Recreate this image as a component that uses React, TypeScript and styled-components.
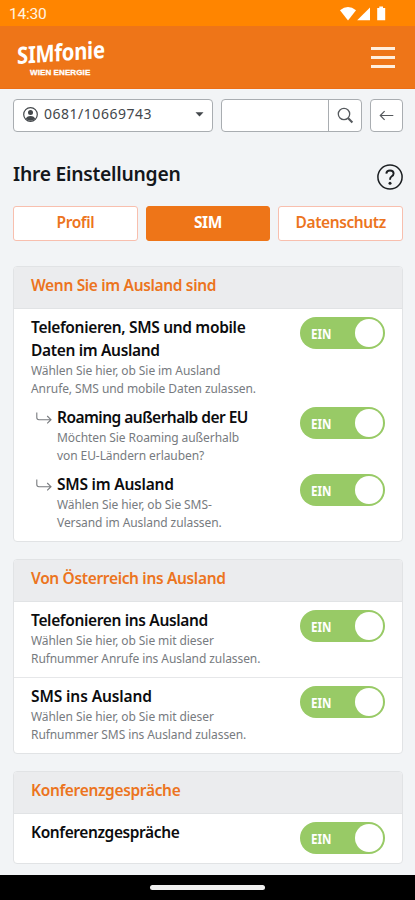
import React from 'react';
import styled, { createGlobalStyle } from 'styled-components';

const Global = createGlobalStyle`
  * { box-sizing: border-box; }
  html, body { margin: 0; background: #f2f4f6; }
  body { font-family: "Noto Sans", sans-serif; color: #0c0c0e; overflow: hidden; }
`;

const Screen = styled.div`
  width: 415px;
  height: 900px;
  display: flex;
  flex-direction: column;
  overflow: hidden;
  background: #f2f4f6;
`;

const StatusBar = styled.div`
  flex: none;
  height: 26px;
  padding: 1px 27px 0 9px;
  display: flex;
  align-items: center;
  justify-content: space-between;
  background: #ff8500;
  color: #fff4e4;
  font: 400 15.5px/26px Roboto, sans-serif;
  letter-spacing: -0.25px;
`;

const StatusIcons = styled.svg`
  width: 48px;
  height: 16px;
  display: block;
`;

const Header = styled.header`
  flex: none;
  height: 63px;
  padding: 0 20px 0 17px;
  display: flex;
  justify-content: space-between;
  align-items: flex-start;
  background: #ee7518;
  border-bottom: 1px solid #ec6e16;
`;

const Brand = styled.div`
  padding-top: 11px;
  display: flex;
  flex-direction: column;
  color: #fff;
`;

const BrandName = styled.div`
  width: 106px;
  height: 29px;
  font-size: 23.5px;
  font-weight: 700;
  line-height: 30px;
  white-space: nowrap;
  transform-origin: 0 50%;
  transform: translateY(3px) skewY(-4deg) scaleX(0.86);
  letter-spacing: -0.3px;
`;

const BrandOwner = styled.div`
  padding-left: 13px;
  margin-top: 1px;
  font-family: "Liberation Sans", sans-serif;
  font-size: 8px;
  font-weight: 700;
  line-height: 12px;
  letter-spacing: 0.1px;
  -webkit-text-stroke: 0.3px #fff;
  white-space: nowrap;
`;

const MenuButton = styled.button`
  width: 24px;
  height: 21px;
  margin-top: 21px;
  padding: 0;
  border: 0;
  background: none;
  display: flex;
  flex-direction: column;
  justify-content: space-between;
`;

const MenuLine = styled.span`
  height: 3px;
  width: 24px;
  background: #ffeedd;
`;

const Main = styled.main`
  flex: 1;
  padding: 10px 12px 0 13px;
  display: flex;
  flex-direction: column;
`;

const Toolbar = styled.div`
  display: flex;
  height: 33px;
  gap: 8px;
`;

const NumberSelect = styled.div`
  width: 200px;
  display: flex;
  align-items: center;
  padding: 0 8px 3px 9px;
  background: #fff;
  border: 1px solid #a9adb1;
  border-radius: 4px;
  color: #43474b;
`;

const NumberText = styled.span`
  flex: 1;
  margin-left: 6px;
  font-size: 14px;
  line-height: 20px;
  letter-spacing: 0.52px;
`;

const SearchGroup = styled.div`
  width: 141px;
  display: flex;
  background: #fff;
  border: 1px solid #a9adb1;
  border-radius: 4px;
`;

const SearchField = styled.input`
  width: 106px;
  min-width: 0;
  border: 0;
  background: none;
  outline: none;
`;

const SearchButton = styled.button`
  flex: 1;
  padding: 0;
  border: 0;
  border-left: 1px solid #a9adb1;
  background: none;
  display: grid;
  place-items: center;
`;

const BackButton = styled.button`
  width: 33px;
  padding: 0;
  display: grid;
  place-items: center;
  background: #fff;
  border: 1px solid #a9adb1;
  border-radius: 4px;
`;

const HeadingRow = styled.div`
  height: 74px;
  padding-top: 27px;
  display: flex;
  justify-content: space-between;
  align-items: flex-start;
`;

const Heading = styled.h1`
  margin: 0;
  padding-top: 2px;
  font-size: 19.3px;
  font-weight: 600;
  line-height: 26px;
  letter-spacing: -0.25px;
  color: #14171b;
`;

const HelpIcon = styled.svg`
  width: 26px;
  height: 26px;
  margin: 5px 0 0;
`;

const Tabs = styled.div`
  display: grid;
  grid-template-columns: repeat(3, 1fr);
  gap: 8px;
  height: 35px;
`;

const Tab = styled.button<{ $active?: boolean }>`
  padding: 0 0 4px;
  border: 1px solid ${p => (p.$active ? '#ee7518' : '#f8bfae')};
  border-radius: 3px;
  background: ${p => (p.$active ? '#ee7518' : '#fff')};
  color: ${p => (p.$active ? '#fff' : '#ec7420')};
  font-family: inherit;
  font-size: 15.5px;
  font-weight: ${p => (p.$active ? 700 : 600)};
  line-height: 20px;
  letter-spacing: -0.4px;
`;

const Card = styled.section<{ $top: number }>`
  margin-top: ${p => p.$top}px;
  background: #fff;
  border: 1px solid #e1e3e5;
  border-radius: 4px;
  overflow: hidden;
`;

const CardTitle = styled.h2`
  margin: 0;
  height: 42px;
  padding: 7px 17px 0;
  background: #ebecee;
  border-bottom: 1px solid #e1e3e5;
  color: #ec7420;
  font-size: 15.5px;
  font-weight: 600;
  line-height: 22px;
  letter-spacing: -0.34px;
`;

const Setting = styled.div<{ $height: number; $nested?: boolean; $divided?: boolean }>`
  height: ${p => p.$height}px;
  padding: ${p => (p.$nested ? '0 17px 0 22px' : '7px 17px 0')};
  display: flex;
  align-items: flex-start;
  border-top: ${p => (p.$divided ? '1px solid #e6e7e9' : '0')};
`;

const NestIcon = styled.svg`
  flex: none;
  width: 16px;
  height: 14px;
  margin: 6px 5px 0 0;
`;

const SettingText = styled.div`
  flex: 1;
  white-space: pre-line;
`;

const SettingName = styled.div<{ $tracking?: number }>`
  font-size: 15.5px;
  font-weight: 600;
  line-height: 23px;
  letter-spacing: ${p => p.$tracking ?? -0.33}px;
`;

const SettingHint = styled.div`
  color: #777b80;
  font-size: 12px;
  line-height: 17.6px;
  letter-spacing: -0.08px;
`;

const Toggle = styled.div`
  flex: none;
  width: 85px;
  height: 32px;
  margin-top: 1px;
  padding: 2px 2px 2px 11px;
  display: flex;
  align-items: center;
  justify-content: space-between;
  border-radius: 16px;
  background: #98ca66;
  color: #fff;
  font-size: 14.5px;
  font-weight: 700;
`;

const ToggleLabel = styled.span`
  line-height: 20px;
  transform: scaleX(0.8);
  transform-origin: 0 50%;
`;

const Knob = styled.span`
  width: 28px;
  height: 28px;
  border-radius: 50%;
  background: #fff;
`;

const NavBar = styled.div`
  flex: none;
  height: 25px;
  display: flex;
  justify-content: center;
  padding-top: 10px;
  background: #000;
`;

const NavPill = styled.div`
  width: 115px;
  height: 5px;
  border-radius: 2.5px;
  background: #f0f0f0;
`;

type SettingData = {
  name: string;
  hint?: string;
  height: number;
  nested?: boolean;
  divided?: boolean;
  tracking?: number;
};

const sections: { title: string; top: number; rows: SettingData[] }[] = [
  {
    title: 'Wenn Sie im Ausland sind',
    top: 25,
    rows: [
      { name: 'Telefonieren, SMS und mobile\nDaten im Ausland', hint: 'Wählen Sie hier, ob Sie im Ausland\nAnrufe, SMS und mobile Daten zulassen.', height: 97 },
      { name: 'Roaming außerhalb der EU', hint: 'Möchten Sie Roaming außerhalb\nvon EU-Ländern erlauben?', height: 67, nested: true, tracking: -0.53 },
      { name: 'SMS im Ausland', hint: 'Wählen Sie hier, ob Sie SMS-\nVersand im Ausland zulassen.', height: 68, nested: true, tracking: -0.22 },
    ],
  },
  {
    title: 'Von Österreich ins Ausland',
    top: 17,
    rows: [
      { name: 'Telefonieren ins Ausland', hint: 'Wählen Sie hier, ob Sie mit dieser\nRufnummer Anrufe ins Ausland zulassen.', height: 75, tracking: -0.35 },
      { name: 'SMS ins Ausland', hint: 'Wählen Sie hier, ob Sie mit dieser\nRufnummer SMS ins Ausland zulassen.', height: 76, divided: true, tracking: -0.1 },
    ],
  },
  {
    title: 'Konferenzgespräche',
    top: 17,
    rows: [{ name: 'Konferenzgespräche', height: 49, tracking: -0.4 }],
  },
];

function SettingRow({ row }: { row: SettingData }) {
  return (
    <Setting $height={row.height} $nested={row.nested} $divided={row.divided}>
      {row.nested && (
        <NestIcon viewBox="0 0 16 14" fill="none" stroke="#777a7e" strokeWidth="1.1">
          <path d="M.8 .5V5.5Q.8 7.7 3 7.7H14.8M11.2 4L15 7.7L11.2 11.4" />
        </NestIcon>
      )}
      <SettingText>
        <SettingName $tracking={row.tracking}>{row.name}</SettingName>
        {row.hint && <SettingHint>{row.hint}</SettingHint>}
      </SettingText>
      <Toggle role="switch" aria-checked="true">
        <ToggleLabel>EIN</ToggleLabel>
        <Knob />
      </Toggle>
    </Setting>
  );
}

export default function App() {
  return (
    <Screen>
      <Global />
      <StatusBar>
        <span>14:30</span>
        <StatusIcons viewBox="0 0 48 16" fill="#fff">
          <path d="M0 4.2Q8 -2.2 16 4.2L8 14.4Z" />
          <path d="M30 1.5V14.2H17.2Z" />
          <path d="M39.3 .5H43V2H45.2V14.2H37.2V2H39.3Z" />
        </StatusIcons>
      </StatusBar>
      <Header>
        <Brand>
          <BrandName>SIMfonie</BrandName>
          <BrandOwner>WIEN ENERGIE</BrandOwner>
        </Brand>
        <MenuButton aria-label="Menü">
          <MenuLine />
          <MenuLine />
          <MenuLine />
        </MenuButton>
      </Header>
      <Main>
        <Toolbar>
          <NumberSelect>
            <svg width="15" height="15" viewBox="0 0 15 15" fill="none" stroke="#43474b">
              <circle cx="7.5" cy="7.5" r="6.8" strokeWidth="1.2" />
              <circle cx="7.5" cy="5.6" r="2.5" fill="#43474b" stroke="none" />
              <path d="M2.8 12Q3.6 8.9 7.5 8.9T12.2 12Q7.5 15.3 2.8 12Z" fill="#43474b" stroke="none" />
            </svg>
            <NumberText>0681/10669743</NumberText>
            <svg width="9" height="5" viewBox="0 0 9 5" fill="#43474b">
              <path d="M.5 .3H8.5L4.5 4.6Z" />
            </svg>
          </NumberSelect>
          <SearchGroup>
            <SearchField aria-label="Suche" />
            <SearchButton aria-label="Suchen">
              <svg width="17" height="17" viewBox="0 0 17 17" fill="none" stroke="#55595d">
                <circle cx="7" cy="7" r="5.7" strokeWidth="1.3" />
                <path d="M11.2 11.2L15.4 15.4" strokeWidth="2.1" />
              </svg>
            </SearchButton>
          </SearchGroup>
          <BackButton aria-label="Zurück">
            <svg width="15" height="11" viewBox="0 0 15 11" fill="none" stroke="#55595d" strokeWidth="1.2">
              <path d="M14.3 5.5H1.5M5.6 1.2L1.3 5.5L5.6 9.8" />
            </svg>
          </BackButton>
        </Toolbar>
        <HeadingRow>
          <Heading>Ihre Einstellungen</Heading>
          <HelpIcon viewBox="0 0 26 26" fill="none" stroke="#1c1f22" strokeWidth="1.5">
            <circle cx="13" cy="13" r="12.1" />
            <path d="M9.3 9.7Q9.6 6.5 13 6.5Q16.6 6.5 16.6 9.5Q16.6 11.2 14.8 12.3Q13 13.4 13 15.8" strokeWidth="1.9" />
            <circle cx="13" cy="19.2" r="1.5" fill="#1c1f22" stroke="none" />
          </HelpIcon>
        </HeadingRow>
        <Tabs>
          <Tab>Profil</Tab>
          <Tab $active>SIM</Tab>
          <Tab>Datenschutz</Tab>
        </Tabs>
        {sections.map(section => (
          <Card key={section.title} $top={section.top}>
            <CardTitle>{section.title}</CardTitle>
            {section.rows.map(row => (
              <SettingRow key={row.name} row={row} />
            ))}
          </Card>
        ))}
      </Main>
      <NavBar>
        <NavPill />
      </NavBar>
    </Screen>
  );
}
